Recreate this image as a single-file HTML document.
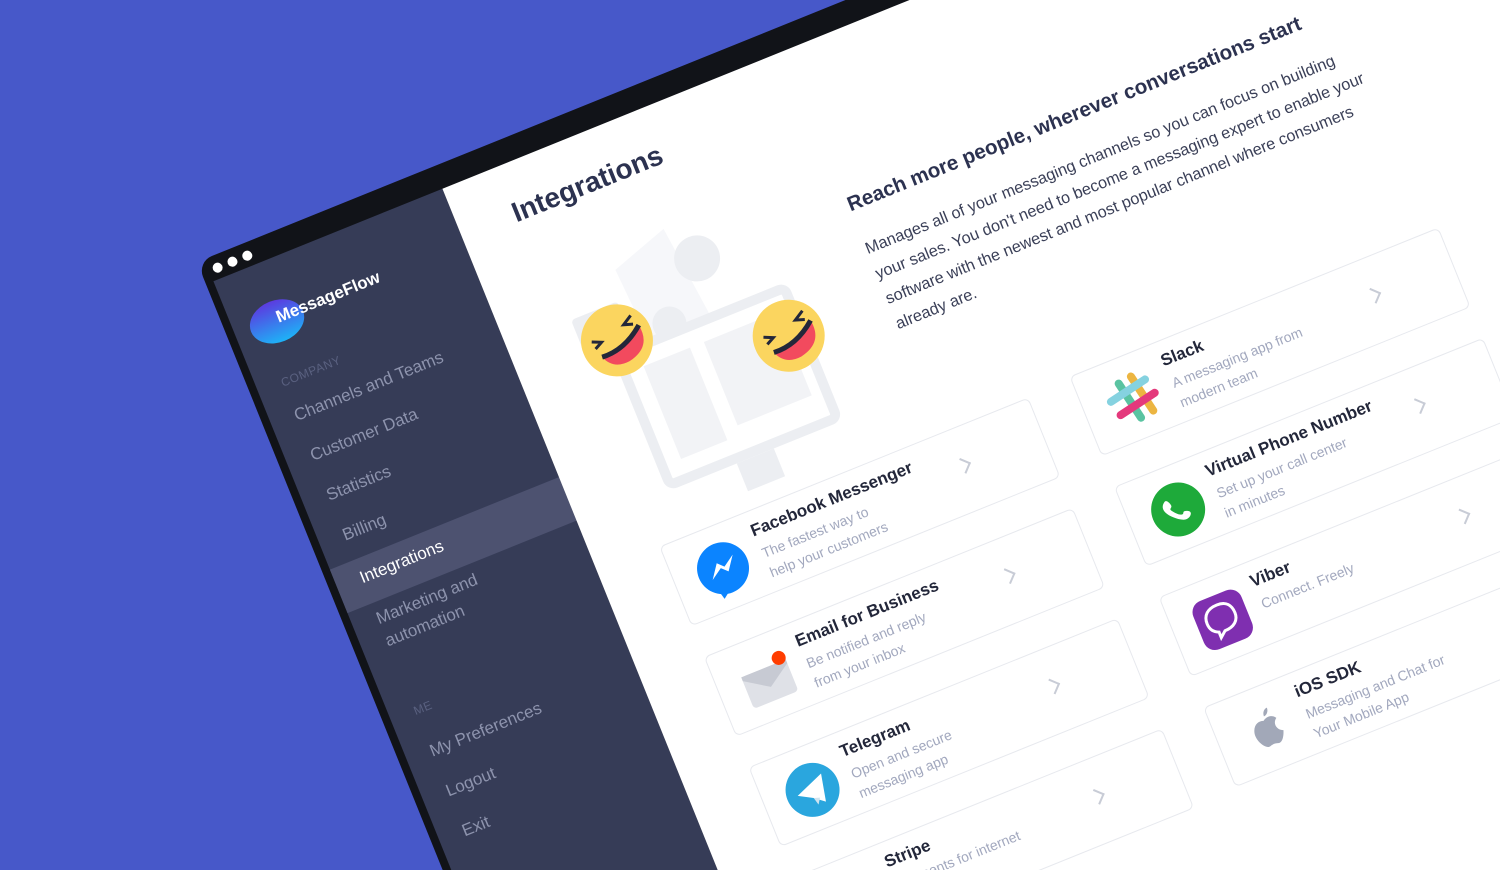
<!DOCTYPE html>
<html><head><meta charset="utf-8"><style>
*{margin:0;padding:0;box-sizing:border-box}
html,body{width:1500px;height:870px;overflow:hidden}
body{background:#4758c9;font-family:"Liberation Sans",sans-serif;position:relative}
#win{position:absolute;left:197px;top:262px;width:2200px;height:1600px;transform-origin:0 0;transform:rotate(-22deg);background:#111318;border-radius:16px 0 0 0}
.dot{position:absolute;top:8px;width:10px;height:10px;border-radius:50%;background:#fff}
#side{position:absolute;left:8px;top:24px;width:247px;height:1600px;background:#363c57}
#side .t{position:absolute;left:25px;color:#8d93ad;font-size:17px;white-space:nowrap}
#side .c{position:absolute;left:25px;color:#5a6180;font-size:12px;letter-spacing:.5px}
#band{position:absolute;left:0;top:311px;width:247px;height:47px;background:#4d5270}
#main{position:absolute;left:255px;top:24px;width:1950px;height:1600px;background:#fff}
.card{position:absolute;width:398px;height:86px;border:1px solid #e7e9ee;border-radius:6px;background:#fff}
.card .ic{position:absolute;left:22px;top:16px;width:56px;height:56px}
.card .ti{position:absolute;left:90px;top:10px;font-size:17px;font-weight:bold;color:#23273a;white-space:nowrap}
.card .de{position:absolute;left:92px;top:34px;font-size:14px;line-height:21px;color:#a2a8be;white-space:nowrap}
.card .ch{position:absolute;left:305px;top:32px;width:12px;height:12px;border-top:2px solid #c8ccd6;border-right:2px solid #c8ccd6;transform:rotate(45deg)}
</style></head><body>
<div id="win">
<div class="dot" style="left:12px"></div><div class="dot" style="left:28px"></div><div class="dot" style="left:44px"></div>
<div id="side">
 <div style="position:absolute;left:16px;top:40px;width:56px;height:42px;border-radius:50%;background:linear-gradient(#5b3be0,#1db3f7)"></div>
 <div style="position:absolute;left:45px;top:48px;color:#fff;font-weight:bold;font-size:17px">MessageFlow</div>
 <div id="band"></div>
 <div class="c" style="top:113px">COMPANY</div>
 <div class="t" style="top:146px">Channels and Teams</div>
 <div class="t" style="top:189px">Customer Data</div>
 <div class="t" style="top:232px">Statistics</div>
 <div class="t" style="top:275px">Billing</div>
 <div class="t" style="top:321px;color:#fff">Integrations</div>
 <div class="t" style="top:363px;line-height:24px">Marketing and<br>automation</div>
 <div class="c" style="top:467px">ME</div>
 <div class="t" style="top:508px">My Preferences</div>
 <div class="t" style="top:551px">Logout</div>
 <div class="t" style="top:594px">Exit</div>
</div>
<div id="main">
 <div style="position:absolute;left:56px;top:34px;font-size:28px;font-weight:bold;color:#2c3250">Integrations</div>
 <div style="position:absolute;left:370px;top:156px;font-size:20.6px;font-weight:bold;color:#2c3250;white-space:nowrap">Reach more people, wherever conversations start</div>
 <div style="position:absolute;left:370px;top:202px;font-size:16.3px;line-height:27px;color:#3b4058;white-space:nowrap">Manages all of your messaging channels so you can focus on building<br>your sales. You don't need to become a messaging expert to enable your<br>software with the newest and most popular channel where consumers<br>already are.</div>
 <svg style="position:absolute;left:40px;top:100px" width="300" height="300" viewBox="0 0 300 300">
  <polygon points="90,40 150,20 170,200 100,210" fill="#f6f7fa"/>
  <rect x="30" y="70" width="50" height="38" rx="4" fill="#eceef2"/>
  <circle cx="170" cy="60" r="23" fill="#eceef2"/>
  <circle cx="120" cy="110" r="17" fill="#eceef2"/>
  <rect x="60" y="120" width="180" height="140" rx="6" fill="#fff" stroke="#eceef2" stroke-width="10"/>
  <rect x="80" y="140" width="50" height="100" fill="#f2f3f6"/>
  <rect x="145" y="140" width="80" height="90" fill="#f2f3f6"/>
  <rect x="130" y="265" width="40" height="30" fill="#eceef2"/>
 </svg>
 <svg style="position:absolute;left:69px;top:170px" width="72" height="72" viewBox="0 0 72 72"><circle cx="36" cy="36" r="36" fill="#fbd55f"/><path d="M12 28l9 4-8 4M58 18l-10 6 9 3" stroke="#23273a" stroke-width="3" fill="none"/><path d="M16 46 Q40 48 62 30 Q66 55 40 60 Q22 62 16 46Z" fill="#f24a5e"/><path d="M16 46 Q40 48 62 30" stroke="#23273a" stroke-width="5" fill="none"/></svg>
 <svg style="position:absolute;left:230px;top:230px" width="72" height="72" viewBox="0 0 72 72"><circle cx="36" cy="36" r="36" fill="#fbd55f"/><path d="M12 28l9 4-8 4M58 18l-10 6 9 3" stroke="#23273a" stroke-width="3" fill="none"/><path d="M16 46 Q40 48 62 30 Q66 55 40 60 Q22 62 16 46Z" fill="#f24a5e"/><path d="M16 46 Q40 48 62 30" stroke="#23273a" stroke-width="5" fill="none"/></svg>

 <div class="card" style="left:67px;top:413px">
  <svg class="ic" viewBox="0 0 56 56"><circle cx="28" cy="27" r="26" fill="#0b84ff"/><path d="M16 48l2 8 8-6z" fill="#0b84ff"/><path d="M14 34l10-14 6 6 12-8-10 14-6-6z" fill="#fff"/></svg>
  <div class="ti">Facebook Messenger</div><div class="de">The fastest way to<br>help your customers</div><div class="ch"></div></div>
 <div class="card" style="left:67px;top:532px">
  <svg class="ic" viewBox="0 0 56 56"><rect x="4" y="16" width="48" height="34" rx="4" fill="#dfe1e7"/><path d="M4 20l24 16 24-16v-4H4z" fill="#c7cad3"/><circle cx="46" cy="12" r="7" fill="#ff3d00"/></svg>
  <div class="ti">Email for Business</div><div class="de">Be notified and reply<br>from your inbox</div><div class="ch"></div></div>
 <div class="card" style="left:67px;top:651px">
  <svg class="ic" viewBox="0 0 56 56"><circle cx="28" cy="28" r="27" fill="#2aa6de"/><path d="M12 28l30-12-6 28-10-8z" fill="#fff"/><path d="M26 36l2 8 4-6z" fill="#cfe3ef"/></svg>
  <div class="ti">Telegram</div><div class="de">Open and secure<br>messaging app</div><div class="ch"></div></div>
 <div class="card" style="left:67px;top:770px">
  <svg class="ic" viewBox="0 0 56 56"><circle cx="28" cy="28" r="27" fill="#6772e5"/></svg>
  <div class="ti">Stripe</div><div class="de">Payments for internet</div><div class="ch"></div></div>

 <div class="card" style="left:511px;top:409px">
  <svg class="ic" viewBox="0 0 56 56"><g stroke-width="8" stroke-linecap="round" opacity=".85"><path d="M20 8l8 40" stroke="#3eb991"/><path d="M34 6l8 40" stroke="#e9a820"/><path d="M6 22l40-8" stroke="#70cadb"/><path d="M10 38l40-8" stroke="#e01765"/></g></svg>
  <div class="ti">Slack</div><div class="de">A messaging app from<br>modern team</div><div class="ch"></div></div>
 <div class="card" style="left:511px;top:528px">
  <svg class="ic" viewBox="0 0 56 56"><circle cx="28" cy="28" r="27" fill="#1eaa3a"/><path d="M18 16c3-2 5 4 5 6s-3 2-2 4 5 7 8 8 2-2 4-2 7 2 5 5-6 4-10 2-11-8-13-13 0-8 3-10z" fill="#fff"/></svg>
  <div class="ti">Virtual Phone Number</div><div class="de">Set up your call center<br>in minutes</div><div class="ch"></div></div>
 <div class="card" style="left:511px;top:647px">
  <svg class="ic" viewBox="0 0 56 56"><rect x="2" y="2" width="52" height="52" rx="12" fill="#7f2fb0"/><path d="M28 12c-10 0-16 5-16 14 0 6 3 10 8 12v6l6-5c10 0 16-5 16-13S38 12 28 12z" fill="none" stroke="#fff" stroke-width="3"/></svg>
  <div class="ti">Viber</div><div class="de">Connect. Freely</div><div class="ch"></div></div>
 <div class="card" style="left:511px;top:766px">
  <svg class="ic" viewBox="0 0 56 56"><path d="M28 18c4-3 10-3 13 2-6 4-4 12 2 14-2 6-6 12-10 10-3-1-5-1-8 0-5 2-12-10-10-18 2-8 8-10 13-8z M30 14c0-4 3-7 6-7 0 4-3 7-6 7z" fill="#a2a8b8"/></svg>
  <div class="ti">iOS SDK</div><div class="de">Messaging and Chat for<br>Your Mobile App</div><div class="ch"></div></div>
</div>
</div>
</body></html>
